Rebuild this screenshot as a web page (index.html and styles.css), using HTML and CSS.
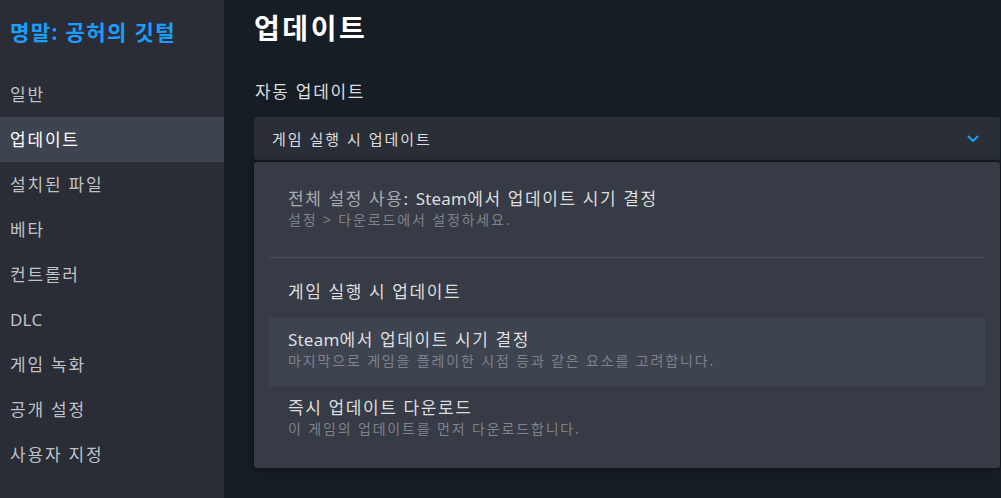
FILE: index.html
```html
<!DOCTYPE html>
<html lang="ko">
<head>
    <meta charset="UTF-8">
    <meta name="viewport" content="width=device-width, initial-scale=1.0">
    <title>명말: 공허의 깃털 - 업데이트</title>
    <link rel="stylesheet" href="styles.css">
</head>
<body>
    <aside class="sidebar">
        <div class="game-title">명말: 공허의 깃털</div>
        <nav class="nav">
            <div class="nav-item">일반</div>
            <div class="nav-item active">업데이트</div>
            <div class="nav-item">설치된 파일</div>
            <div class="nav-item">베타</div>
            <div class="nav-item">컨트롤러</div>
            <div class="nav-item"><span class="en">DLC</span></div>
            <div class="nav-item">게임 녹화</div>
            <div class="nav-item">공개 설정</div>
            <div class="nav-item">사용자 지정</div>
        </nav>
    </aside>

    <main class="content">
        <h1 class="page-title">업데이트</h1>
        <div class="field-label">자동 업데이트</div>

        <div class="dropdown">
            <span class="dropdown-value">게임 실행 시 업데이트</span>
            <svg class="chevron" width="12" height="7" viewBox="0 0 12 7">
                <polyline points="1,1 6,6 11,1" fill="none" stroke="#1a9fff" stroke-width="2"/>
            </svg>
        </div>

        <div class="menu">
            <div class="option">
                <div class="option-title"><span class="dim">전체 설정 사용</span>: <span class="en">Steam</span>에서 업데이트 시기 결정</div>
                <div class="option-desc">설정 &gt; 다운로드에서 설정하세요.</div>
            </div>
            <div class="separator"></div>
            <div class="option single">
                <div class="option-title">게임 실행 시 업데이트</div>
            </div>
            <div class="option hover">
                <div class="option-title"><span class="en">Steam</span>에서 업데이트 시기 결정</div>
                <div class="option-desc">마지막으로 게임을 플레이한 시점 등과 같은 요소를 고려합니다.</div>
            </div>
            <div class="option">
                <div class="option-title">즉시 업데이트 다운로드</div>
                <div class="option-desc">이 게임의 업데이트를 먼저 다운로드합니다.</div>
            </div>
        </div>
    </main>
</body>
</html>
```

FILE: styles.css
```css
body {
    margin: 0;
    height: 498px;
    display: flex;
    overflow: hidden;
    background-color: #171d25;
    font-family: "Noto Sans", "Noto Sans CJK KR", sans-serif;
    color: #dcdedf;
}

/* latin words don't get the wide hangul spacing */
.en {
    letter-spacing: 0.2px;
}

/* left column */
.sidebar {
    width: 224px;
    flex-shrink: 0;
    background-color: #2a2d35;
}
.game-title {
    height: 72px;
    line-height: 64px;
    padding-left: 10px;
    font-size: 21px;
    font-weight: bold;
    letter-spacing: 1.4px;
    color: #1a9fff;
}
.nav-item {
    height: 45px;
    line-height: 45px;
    padding-left: 10px;
    font-size: 17px;
    letter-spacing: 1.8px;
    color: #bfc2c6;
}
.nav-item.active {
    background-color: #3d4450;
    color: #ffffff;
}

/* right side */
.content {
    flex: 1;
    padding: 0 1px 0 30px;
}
.page-title {
    margin: 0;
    line-height: 56px;
    font-size: 28px;
    font-weight: bold;
    letter-spacing: 2.6px;
    color: #ffffff;
}
.field-label {
    margin: 23px 0 12px 1px;
    line-height: 26px;
    font-size: 17px;
    letter-spacing: 1.7px;
    color: #dcdedf;
}
.dropdown {
    height: 43px;
    display: flex;
    align-items: center;
    justify-content: space-between;
    padding: 0 21px 0 18px;
    background-color: #2a2e37;
    border-radius: 3px;
    font-size: 15px;
    letter-spacing: 2px;
    color: #dcdedf;
}
.chevron {
    display: block;
}
.menu {
    margin-top: 2px;
    padding: 15px 15px 14px;
    background-color: #373b45;
    border-radius: 3px;
    box-shadow: 0 0 8px rgba(0, 0, 0, 0.4);
}
.option {
    padding: 11px 19px 15px;
}
.option.single {
    padding: 15px 19px;
}
.option.hover {
    background-color: #3d4450;
}
.option-title {
    line-height: 22px;
    font-size: 17px;
    letter-spacing: 1.6px;
    color: #dcdedf;
}
.option-title .dim {
    color: #a7aab0;
}
.option-desc {
    line-height: 20px;
    font-size: 14px;
    letter-spacing: 1.85px;
    color: #7e828a;
}
.separator {
    height: 1px;
    margin: 12px 0 8px;
    background-color: #4b4f59;
}
```
